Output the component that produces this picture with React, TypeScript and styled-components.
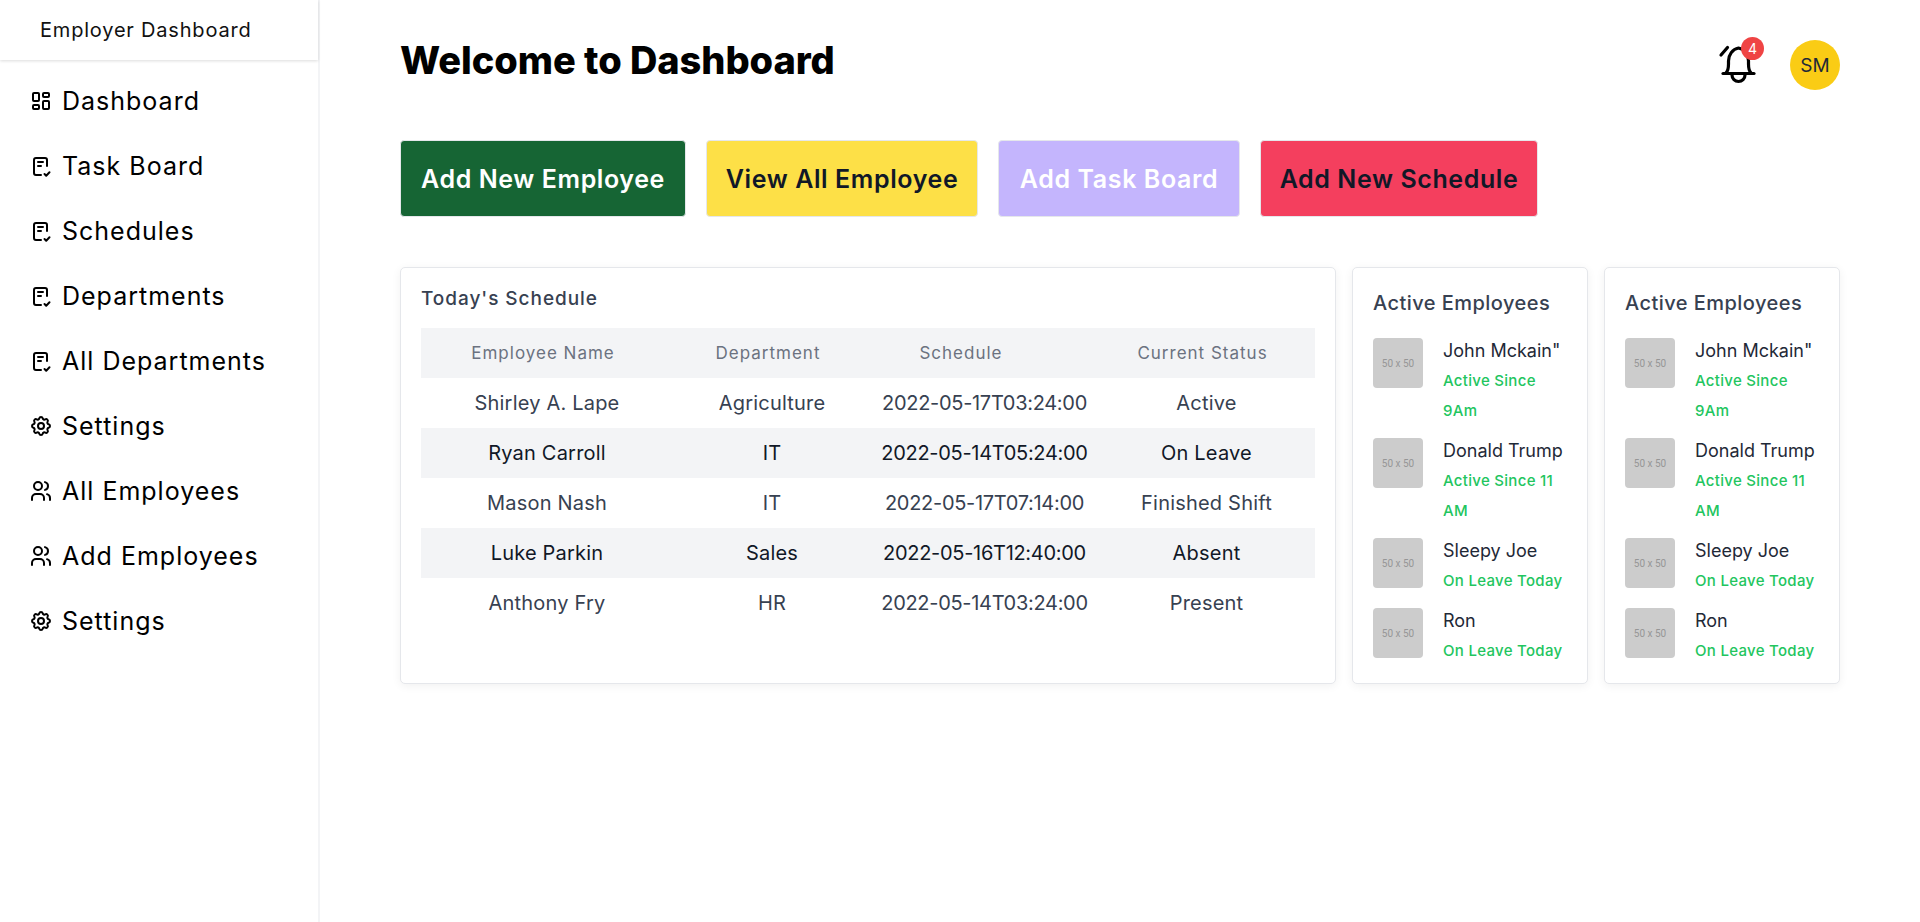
import React, { FC } from 'react';
import styled, { createGlobalStyle } from 'styled-components';
import { TbLayoutDashboard, TbSettings, TbUsers } from 'react-icons/tb';

const GlobalStyle = createGlobalStyle`
  html, body {
    margin: 0;
    padding: 0;
    background: #fff;
    font-family: Inter, "Liberation Sans", sans-serif;
  }
  * { box-sizing: border-box; }
`;

const Page = styled.div`
  display: flex;
  min-height: 100vh;
`;

const Sidebar = styled.aside`
  flex: 0 0 320px;
  border-right: 2px solid #f3f4f6;
`;

const Brand = styled.div`
  height: 60px;
  padding-left: 40px;
  display: flex;
  align-items: center;
  font-size: 20px;
  letter-spacing: 0.8px;
  color: #111;
  box-shadow: 0 1px 3px rgba(0, 0, 0, 0.14);
`;

const Nav = styled.nav`
  display: flex;
  flex-direction: column;
  padding-top: 8px;
`;

const NavItem = styled.a`
  height: 65px;
  padding-left: 29px;
  display: flex;
  align-items: center;
  gap: 9px;
  font-size: 25px;
  letter-spacing: 1px;
  color: #000;
`;

const Main = styled.main`
  flex: 1;
  min-width: 0;
  padding: 40px 80px 0;
`;

const Header = styled.header`
  display: flex;
  justify-content: space-between;
  align-items: flex-start;
`;

const Title = styled.h1`
  margin: 0;
  font-size: 38px;
  line-height: 40px;
  font-weight: 800;
  letter-spacing: -0.05px;
  color: #000;
`;

const HeaderActions = styled.div`
  display: flex;
  align-items: flex-start;
  gap: 29px;
`;

const BellWrap = styled.div`
  position: relative;
  width: 46px;
  height: 46px;
  margin-top: 2px;
  color: #000;
`;

const Badge = styled.span`
  position: absolute;
  top: -5px;
  right: -3px;
  width: 23px;
  height: 23px;
  border-radius: 50%;
  background: #ef4444;
  color: #fff;
  font-size: 14px;
  display: flex;
  align-items: center;
  justify-content: center;
`;

const Avatar = styled.div`
  width: 50px;
  height: 50px;
  border-radius: 50%;
  background: #facc15;
  color: #1f2937;
  font-size: 19px;
  display: flex;
  align-items: center;
  justify-content: center;
`;

const Actions = styled.div`
  display: flex;
  gap: 20px;
  margin-top: 50px;
`;

const ActionButton = styled.button<{ $bg: string; $fg: string; $w: number }>`
  width: ${({ $w }) => $w}px;
  height: 77px;
  padding: 0;
  border: 1px solid #e5e7eb;
  border-radius: 4px;
  background: ${({ $bg }) => $bg};
  color: ${({ $fg }) => $fg};
  font-family: inherit;
  font-size: 25px;
  font-weight: 600;
  letter-spacing: 0.6px;
`;

const Cards = styled.div`
  display: grid;
  grid-template-columns: 1fr 236px 236px;
  gap: 16px;
  margin: 50px 1px 0 0;
`;

const Card = styled.section`
  height: 417px;
  padding: 20px;
  background: #fff;
  border: 1px solid #e5e7eb;
  border-radius: 5px;
  box-shadow: 0 2px 10px rgba(0, 0, 0, 0.06);
`;

const CardTitle = styled.h2`
  margin: -1px 0 17px;
  font-size: 19px;
  line-height: 24px;
  font-weight: 500;
  letter-spacing: 0.95px;
  color: #374151;
`;

const ScheduleTable = styled.table`
  width: 894px;
  table-layout: fixed;
  border-collapse: collapse;
`;

const HeadCell = styled.th<{ $w: number; $pad?: number }>`
  width: ${({ $w }) => $w}px;
  height: 50px;
  padding: 0 ${({ $pad }) => $pad ?? 8}px 0 0;
  font-size: 17px;
  font-weight: 400;
  letter-spacing: 1px;
  color: #6b7280;
  background: #f3f4f6;
`;

const Row = styled.tr<{ $shaded: boolean }>`
  background: ${({ $shaded }) => ($shaded ? '#f3f4f6' : '#fff')};
  color: ${({ $shaded }) => ($shaded ? '#111827' : '#374151')};
`;

const Cell = styled.td<{ $date?: boolean }>`
  height: 50px;
  padding: 0;
  text-align: center;
  font-size: 20px;
  letter-spacing: ${({ $date }) => ($date ? '-0.3px' : '0.2px')};
`;

const EmployeeTitle = styled(CardTitle)`
  margin: 0 0 20px;
  font-size: 20px;
  line-height: 30px;
  letter-spacing: 0.45px;
`;

const EmployeeList = styled.ul`
  list-style: none;
  margin: 0;
  padding: 0;
  display: flex;
  flex-direction: column;
  gap: 10px;
`;

const EmployeeRow = styled.li`
  display: flex;
  gap: 20px;
`;

const Placeholder = styled.div`
  flex: 0 0 50px;
  height: 50px;
  border-radius: 4px;
  background: #cccccc;
  color: #969696;
  font-family: Roboto, sans-serif;
  font-size: 10px;
  display: flex;
  align-items: center;
  justify-content: center;
`;

const EmployeeText = styled.div`
  margin-top: -2px;
  margin-bottom: 2px;
`;

const EmployeeName = styled.div`
  font-size: 18px;
  line-height: 30px;
  white-space: nowrap;
  color: #1f2937;
`;

const EmployeeStatus = styled.div`
  font-size: 15px;
  line-height: 30px;
  font-weight: 500;
  letter-spacing: 0.3px;
  white-space: nowrap;
  color: #22c55e;
`;

const TaskIcon: FC = () => (
  <svg width="24" height="24" viewBox="0 0 24 24" fill="none" stroke="currentColor" strokeWidth="2" strokeLinecap="round" strokeLinejoin="round">
    <path d="M18 12V6a2 2 0 0 0-2-2H7a2 2 0 0 0-2 2v13a2 2 0 0 0 2 2h5" />
    <path d="M9 8h5M9 12h3" />
    <path d="M15.5 20l1.7 1.7 3.3-3.4" />
  </svg>
);

const BellIcon: FC = () => (
  <svg width="46" height="46" viewBox="0 0 46 46" fill="none" stroke="currentColor" strokeWidth="3.2" strokeLinecap="round" strokeLinejoin="round">
    <path d="M6 13l6.5-7.5" />
    <path d="M8 31.5h31" />
    <path d="M11 31c2-2 2.5-5 2.5-9v-3c0-6 4-12 10-13c6 1 10 7 10 13v3c0 4 .5 7 2.5 9" />
    <path d="M17 33a6.5 6.5 0 0 0 13 0" />
  </svg>
);

const navItems = [
  { label: 'Dashboard', icon: <TbLayoutDashboard size={24} /> },
  { label: 'Task Board', icon: <TaskIcon /> },
  { label: 'Schedules', icon: <TaskIcon /> },
  { label: 'Departments', icon: <TaskIcon /> },
  { label: 'All Departments', icon: <TaskIcon /> },
  { label: 'Settings', icon: <TbSettings size={24} /> },
  { label: 'All Employees', icon: <TbUsers size={24} /> },
  { label: 'Add Employees', icon: <TbUsers size={24} /> },
  { label: 'Settings', icon: <TbSettings size={24} /> }
];

const buttons = [
  { label: 'Add New Employee', bg: '#166534', fg: '#fff', w: 286 },
  { label: 'View All Employee', bg: '#fde047', fg: '#111827', w: 272 },
  { label: 'Add Task Board', bg: '#c4b5fd', fg: '#fff', w: 242 },
  { label: 'Add New Schedule', bg: '#f43f5e', fg: '#111827', w: 278 }
];

const rows = [
  ['Shirley A. Lape', 'Agriculture', '2022-05-17T03:24:00', 'Active'],
  ['Ryan Carroll', 'IT', '2022-05-14T05:24:00', 'On Leave'],
  ['Mason Nash', 'IT', '2022-05-17T07:14:00', 'Finished Shift'],
  ['Luke Parkin', 'Sales', '2022-05-16T12:40:00', 'Absent'],
  ['Anthony Fry', 'HR', '2022-05-14T03:24:00', 'Present']
];

const employees = [
  { name: 'John Mckain"', status: ['Active Since', '9Am'] },
  { name: 'Donald Trump', status: ['Active Since 11', 'AM'] },
  { name: 'Sleepy Joe', status: ['On Leave Today'] },
  { name: 'Ron', status: ['On Leave Today'] }
];

const EmployeesCard: FC = () => (
  <Card>
    <EmployeeTitle>Active Employees</EmployeeTitle>
    <EmployeeList>
      {employees.map((employee) => (
        <EmployeeRow key={employee.name}>
          <Placeholder>50 x 50</Placeholder>
          <EmployeeText>
            <EmployeeName>{employee.name}</EmployeeName>
            {employee.status.map((line) => (
              <EmployeeStatus key={line}>{line}</EmployeeStatus>
            ))}
          </EmployeeText>
        </EmployeeRow>
      ))}
    </EmployeeList>
  </Card>
);

const App: FC = () => (
  <Page>
    <GlobalStyle />
    <Sidebar>
      <Brand>Employer Dashboard</Brand>
      <Nav>
        {navItems.map((item, index) => (
          <NavItem key={index}>
            {item.icon}
            {item.label}
          </NavItem>
        ))}
      </Nav>
    </Sidebar>
    <Main>
      <Header>
        <Title>Welcome to Dashboard</Title>
        <HeaderActions>
          <BellWrap>
            <BellIcon />
            <Badge>4</Badge>
          </BellWrap>
          <Avatar>SM</Avatar>
        </HeaderActions>
      </Header>
      <Actions>
        {buttons.map((button) => (
          <ActionButton key={button.label} $bg={button.bg} $fg={button.fg} $w={button.w}>
            {button.label}
          </ActionButton>
        ))}
      </Actions>
      <Cards>
        <Card>
          <CardTitle>Today's Schedule</CardTitle>
          <ScheduleTable>
            <thead>
              <tr>
                <HeadCell $w={252}>Employee Name</HeadCell>
                <HeadCell $w={198}>Department</HeadCell>
                <HeadCell $w={227} $pad={47}>Schedule</HeadCell>
                <HeadCell $w={217}>Current Status</HeadCell>
              </tr>
            </thead>
            <tbody>
              {rows.map((row, index) => (
                <Row key={row[0]} $shaded={index % 2 === 1}>
                  {row.map((value, column) => (
                    <Cell key={value} $date={column === 2}>{value}</Cell>
                  ))}
                </Row>
              ))}
            </tbody>
          </ScheduleTable>
        </Card>
        <EmployeesCard />
        <EmployeesCard />
      </Cards>
    </Main>
  </Page>
);

export default App;
